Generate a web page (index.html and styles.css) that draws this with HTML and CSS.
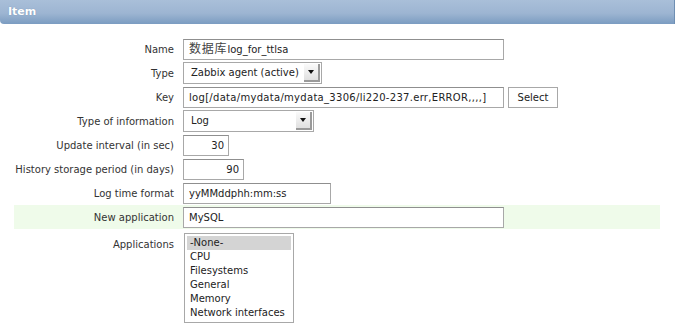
FILE: index.html
```html
<!DOCTYPE html>
<html lang="en">
<head>
    <meta charset="UTF-8">
    <title>Item</title>
    <link rel="stylesheet" href="styles.css">
</head>
<body>
    <div class="header">Item</div>

    <div class="form">
        <div class="row">
            <label>Name</label>
            <div class="field"><span class="input w-wide"><span class="cjk">数据库</span>log_for_ttlsa</span></div>
        </div>
        <div class="row">
            <label>Type</label>
            <div class="field">
                <span class="select w-type"><span class="select-text">Zabbix agent (active)</span><span class="arrow"></span></span>
            </div>
        </div>
        <div class="row">
            <label>Key</label>
            <div class="field">
                <span class="input w-wide key">log[/data/mydata/mydata_3306/li220-237.err,ERROR,,,,]</span>
                <span class="button">Select</span>
            </div>
        </div>
        <div class="row">
            <label>Type of information</label>
            <div class="field">
                <span class="select w-info"><span class="select-text">Log</span><span class="arrow"></span></span>
            </div>
        </div>
        <div class="row">
            <label>Update interval (in sec)</label>
            <div class="field"><span class="input num w-interval">30</span></div>
        </div>
        <div class="row">
            <label>History storage period (in days)</label>
            <div class="field"><span class="input num w-history">90</span></div>
        </div>
        <div class="row">
            <label>Log time format</label>
            <div class="field"><span class="input w-format">yyMMddphh:mm:ss</span></div>
        </div>
        <div class="row highlight">
            <label>New application</label>
            <div class="field"><span class="input w-wide">MySQL</span></div>
        </div>
        <div class="row list-row">
            <label>Applications</label>
            <div class="field">
                <ul class="listbox">
                    <li class="selected">-None-</li>
                    <li>CPU</li>
                    <li>Filesystems</li>
                    <li>General</li>
                    <li>Memory</li>
                    <li>Network interfaces</li>
                </ul>
            </div>
        </div>
    </div>
</body>
</html>
```

FILE: styles.css
```css
body {
    margin: 0;
    font-family: "DejaVu Sans", Verdana, "Noto Sans CJK SC", sans-serif;
    font-size: 10px;
    color: #222;
    background: #fff;
}
.header {
    width: 666px;
    height: 24px;
    line-height: 24px;
    padding-left: 8px;
    background: linear-gradient(#a9bfd9, #9db5d2 55%, #7b9cc1);
    border-right: 1px solid #6f8fb3;
    border-bottom-left-radius: 4px;
    color: #fff;
    font-weight: bold;
    font-size: 11px;
    text-shadow: 0 0 1px #6a89ad;
}
.form {
    padding-top: 13px;
    margin-left: 14px;
    width: 646px;
}
.row {
    display: grid;
    grid-template-columns: 160px 1fr;
    column-gap: 9px;
    align-items: center;
    height: 24px;
}
.row label {
    text-align: right;
    color: #333;
}
.highlight {
    background: #effbea;
}
.field {
    display: flex;
    align-items: center;
    gap: 4px;
}
.input {
    box-sizing: border-box;
    height: 21px;
    line-height: 19px;
    padding: 0 5px;
    border: 1px solid #a8a8a8;
    border-top-color: #8f8f8f;
    background: #fff;
    white-space: nowrap;
    overflow: hidden;
}
.cjk {
    font-family: "Noto Sans CJK SC", sans-serif;
    font-size: 12px;
    line-height: 10px;
    letter-spacing: 0.8px;
    color: #444;
}
.key {
    letter-spacing: 0.3px;
}
.num {
    text-align: right;
    padding-right: 4px;
}
.w-wide { width: 321px; }
.w-interval { width: 46px; }
.w-history { width: 61px; }
.w-format { width: 148px; }
.w-type { width: 139px; }
.w-info { width: 131px; }
.button {
    box-sizing: border-box;
    width: 50px;
    height: 21px;
    line-height: 19px;
    text-align: center;
    border: 1px solid #a8a8a8;
    background: #fff;
}
.select {
    box-sizing: border-box;
    display: flex;
    height: 22px;
    border: 1px solid #a8a8a8;
    background: #fff;
}
.select-text {
    flex: 1;
    line-height: 20px;
    padding-left: 7px;
}
.arrow {
    width: 16px;
    margin: 1px;
    background: linear-gradient(#fafafa, #e0e0e0);
    border-right: 2px solid #9a9a9a;
    border-bottom: 2px solid #9a9a9a;
    box-sizing: border-box;
    display: flex;
    align-items: center;
    justify-content: center;
}
.arrow::after {
    content: "";
    border-left: 3px solid transparent;
    border-right: 3px solid transparent;
    border-top: 4px solid #111;
}
.list-row {
    height: auto;
    align-items: start;
    padding-top: 4px;
}
.list-row label {
    padding-top: 6px;
}
.listbox {
    box-sizing: border-box;
    width: 110px;
    margin: 0 0 0 1px;
    padding: 2px;
    list-style: none;
    border: 1px solid #a8a8a8;
}
.listbox li {
    height: 14px;
    line-height: 14px;
    padding-left: 3px;
    white-space: nowrap;
}
.listbox .selected {
    background: #d4d4d4;
}
```
